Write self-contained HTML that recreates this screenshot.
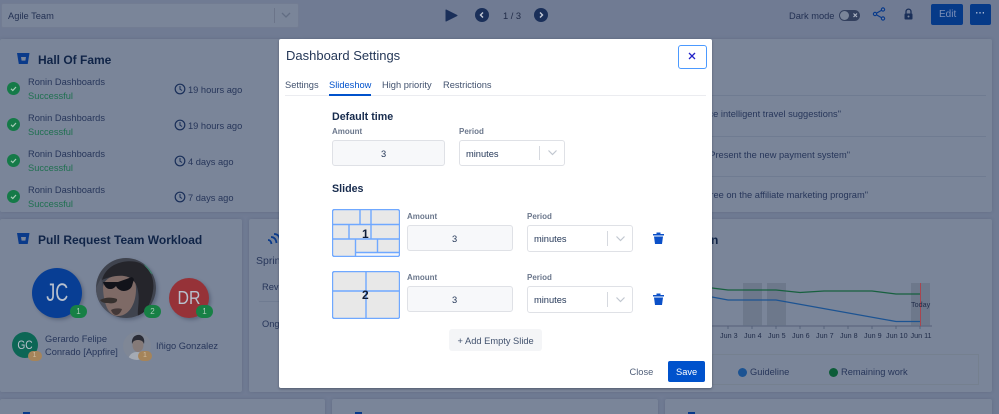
<!DOCTYPE html>
<html><head><meta charset="utf-8"><style>
html,body{margin:0;padding:0}
body{width:999px;height:414px;overflow:hidden;position:relative;background:#707b93;font-family:"Liberation Sans",sans-serif;color:#2e3b5c}
#w{position:absolute;left:0;top:0;width:999px;height:414px;overflow:hidden;filter:blur(.3px)}
.a{position:absolute;box-sizing:border-box}
.t{position:absolute;line-height:0;white-space:nowrap}
.card{position:absolute;background:#7a8599;border-radius:2px;box-shadow:0 0 3px rgba(60,70,95,.25)}
.n{font-size:9.3px;color:#27365a}
.s{font-size:9.3px;color:#1f7050}
.h{font-size:12px;font-weight:bold;color:#102447}
.c{border-radius:50%;position:absolute;text-align:center;color:#b8c0cd}
.c span{display:inline-block}
.b{position:absolute;border-radius:7px;text-align:center;color:#a9cbb8;font-size:8px;background:#178045}
.l{position:absolute;height:1px;background:#6f7b91}
.j{font-size:7.2px;color:#1f2b48;top:336px}
#m{position:absolute;left:279px;top:39px;width:433px;height:349px;background:#fff;border-radius:2px;box-shadow:0 1px 2px rgba(40,50,70,.5)}
.lb{font-size:8px;font-weight:bold;color:#6b778c}
.inp{position:absolute;box-sizing:border-box;background:#f7f8fa;border:1.5px solid #dfe1e6;border-radius:3px;width:106px;height:26px}
.sel{position:absolute;box-sizing:border-box;background:#fff;border:1.5px solid #dfe1e6;border-radius:3px;width:106px;height:27px}
.m9{font-size:9.3px;color:#253858}
</style></head><body><div id="w">

<!-- top bar -->
<div class="a" style="left:1px;top:3px;width:298px;height:25px;background:#7a8599;border:1px solid #727c92;border-radius:2px"></div>
<div class="a" style="left:274px;top:8px;width:1px;height:15px;background:#6b7489"></div>
<svg class="a" style="left:281px;top:12px" width="10" height="7"><path d="M1 1l4 4 4-4" fill="none" stroke="#626d83" stroke-width="1.300"/></svg>
<div class="t" style="left:8px;top:16px;font-size:9.3px;color:#233153">Agile Team</div>
<svg class="a" style="left:445px;top:9px" width="13" height="13"><path d="M1 1L12 6.500 1 12z" fill="#1a2f59" stroke="#1a2f59" stroke-linejoin="round"/></svg>
<div class="c" style="left:475px;top:8px;width:14px;height:14px;background:#1a2f59"></div>
<svg class="a" style="left:475px;top:8px" width="14" height="14"><path d="M8 4.500L5.500 7 8 9.500" fill="none" stroke="#c6ccd8" stroke-width="1.400"/></svg>
<div class="t" style="left:503px;top:16px;font-size:9.3px;color:#1f2a47">1 / 3</div>
<div class="c" style="left:534px;top:8px;width:14px;height:14px;background:#1a2f59"></div>
<svg class="a" style="left:534px;top:8px" width="14" height="14"><path d="M6 4.500L8.500 7 6 9.500" fill="none" stroke="#c6ccd8" stroke-width="1.400"/></svg>
<div class="t" style="left:789px;top:16px;font-size:9.3px;color:#233153">Dark mode</div>
<div class="a" style="left:839px;top:10px;width:21px;height:11px;border-radius:6px;background:#33405e"></div>
<div class="c" style="left:840px;top:11px;width:9px;height:9px;background:#7a8599"></div>
<svg class="a" style="left:852px;top:12px" width="7" height="7"><path d="M1.500 1.500l3.500 3.500M5 1.500L1.500 5" stroke="#aab2c2" stroke-width="1.200"/></svg>
<svg class="a" style="left:872px;top:7px" width="14" height="14"><path d="M11 2.500L3 7l8 4.500" fill="none" stroke="#0a3a8a" stroke-width="1.200"/><circle cx="11" cy="2.500" r="1.600" fill="#7a8599" stroke="#0a3a8a" stroke-width="1.200"/><circle cx="3" cy="7" r="1.600" fill="#7a8599" stroke="#0a3a8a" stroke-width="1.200"/><circle cx="11" cy="11.500" r="1.600" fill="#7a8599" stroke="#0a3a8a" stroke-width="1.200"/></svg>
<svg class="a" style="left:903px;top:8px" width="11" height="12"><path d="M3 5.500V3.600a2.500 2.500 0 015 0v1.900" fill="none" stroke="#1a2f59" stroke-width="1.300"/><rect x="1.500" y="5.500" width="8" height="6" rx="1" fill="#1a2f59"/><circle cx="5.500" cy="8.500" r="1" fill="#7a8599"/></svg>
<div class="a" style="left:931px;top:4px;width:32px;height:21px;background:#063a88;border-radius:2px"></div>
<div class="t" style="left:939px;top:14.500px;font-size:10px;color:#7e91b8">Edit</div>
<div class="a" style="left:970px;top:4px;width:21px;height:21px;background:#063a88;border-radius:2px"></div>
<div class="t" style="left:975.500px;top:13px;font-size:9px;font-weight:bold;color:#b9c4da;letter-spacing:.3px">···</div>

<!-- row 1 -->
<div class="card" style="left:0;top:39px;width:300px;height:173px"></div>
<div class="card" style="left:300px;top:39px;width:692px;height:173px"></div>
<svg class="a" style="left:17px;top:53px" width="13" height="12"><path d="M0 0h12.500l-1.800 11H1.800z" fill="#0a3a8a"/><path d="M4 4h5l-.6 3.600H4.600z" fill="#7a8599"/></svg>
<div class="t h" style="left:38px;top:60px">Hall Of Fame</div>

<svg class="a" style="left:7px;top:82px" width="13" height="13"><circle cx="6.500" cy="6.500" r="6.500" fill="#157a48"/><path d="M4 6.800l1.800 1.700L9 5" fill="none" stroke="#a9cdb8" stroke-width="1.200"/></svg>
<div class="t n" style="left:28px;top:82px">Ronin Dashboards</div>
<div class="t s" style="left:28px;top:96px">Successful</div>
<svg class="a" style="left:174px;top:83px" width="12" height="12"><circle cx="6" cy="6" r="4.800" fill="none" stroke="#1a2f59" stroke-width="1.200"/><path d="M6 3v3.200l2 1.300" fill="none" stroke="#1a2f59" stroke-width="1"/></svg>
<div class="t n" style="left:188px;top:89.500px">19 hours ago</div>

<svg class="a" style="left:7px;top:118px" width="13" height="13"><circle cx="6.500" cy="6.500" r="6.500" fill="#157a48"/><path d="M4 6.800l1.800 1.700L9 5" fill="none" stroke="#a9cdb8" stroke-width="1.200"/></svg>
<div class="t n" style="left:28px;top:118px">Ronin Dashboards</div>
<div class="t s" style="left:28px;top:132px">Successful</div>
<svg class="a" style="left:174px;top:119px" width="12" height="12"><circle cx="6" cy="6" r="4.800" fill="none" stroke="#1a2f59" stroke-width="1.200"/><path d="M6 3v3.200l2 1.300" fill="none" stroke="#1a2f59" stroke-width="1"/></svg>
<div class="t n" style="left:188px;top:125.500px">19 hours ago</div>

<svg class="a" style="left:7px;top:154px" width="13" height="13"><circle cx="6.500" cy="6.500" r="6.500" fill="#157a48"/><path d="M4 6.800l1.800 1.700L9 5" fill="none" stroke="#a9cdb8" stroke-width="1.200"/></svg>
<div class="t n" style="left:28px;top:154px">Ronin Dashboards</div>
<div class="t s" style="left:28px;top:168px">Successful</div>
<svg class="a" style="left:174px;top:155px" width="12" height="12"><circle cx="6" cy="6" r="4.800" fill="none" stroke="#1a2f59" stroke-width="1.200"/><path d="M6 3v3.200l2 1.300" fill="none" stroke="#1a2f59" stroke-width="1"/></svg>
<div class="t n" style="left:188px;top:161.500px">4 days ago</div>

<svg class="a" style="left:7px;top:190px" width="13" height="13"><circle cx="6.500" cy="6.500" r="6.500" fill="#157a48"/><path d="M4 6.800l1.800 1.700L9 5" fill="none" stroke="#a9cdb8" stroke-width="1.200"/></svg>
<div class="t n" style="left:28px;top:190px">Ronin Dashboards</div>
<div class="t s" style="left:28px;top:204px">Successful</div>
<svg class="a" style="left:174px;top:191px" width="12" height="12"><circle cx="6" cy="6" r="4.800" fill="none" stroke="#1a2f59" stroke-width="1.200"/><path d="M6 3v3.200l2 1.300" fill="none" stroke="#1a2f59" stroke-width="1"/></svg>
<div class="t n" style="left:188px;top:197.500px">7 days ago</div>

<div class="l" style="left:712px;top:95px;width:274px"></div>
<div class="l" style="left:712px;top:136px;width:274px"></div>
<div class="l" style="left:712px;top:176px;width:274px"></div>
<div class="t n" style="right:158px;top:114px">Introduce intelligent travel suggestions"</div>
<div class="t n" style="right:149px;top:154.500px">"Present the new payment system"</div>
<div class="t n" style="right:131px;top:195px">Agree on the affiliate marketing program"</div>

<!-- row 2 -->
<div class="card" style="left:0;top:219px;width:242px;height:173px"></div>
<div class="card" style="left:249px;top:219px;width:743px;height:173px"></div>
<svg class="a" style="left:17px;top:233px" width="13" height="12"><path d="M0 0h12.500l-1.800 11H1.800z" fill="#0a3a8a"/><path d="M4 4h5l-.6 3.600H4.600z" fill="#7a8599"/></svg>
<div class="t h" style="left:38px;top:240px">Pull Request Team Workload</div>

<div class="c" style="left:32px;top:268px;width:50px;height:50px;background:#083e94;font-size:25px;line-height:50px;box-shadow:2px 2px 3px rgba(50,60,85,.4)"><span style="transform:scaleX(.72)">JC</span></div>
<svg class="a" style="left:96px;top:258px;border-radius:50%;box-shadow:2px 2px 3px rgba(50,60,85,.4)" width="60" height="60" viewBox="0 0 60 60">
<rect width="60" height="60" fill="#3f434e"/>
<path d="M45 0h15v18l-8-4z" fill="#3d7d6a"/>
<path d="M0 30l5-10 6 26 10 14H0z" fill="#4c505c"/>
<path d="M7 30c0-8 8-14 24-13 6 1 9 6 9 14 0 16-8 27-18 27-8 0-14-8-15-28z" fill="#7e6a66"/>
<path d="M6 22C10 6 30 0 44 5c10 5 15 16 13 28-2 12-6 20-15 26-1-8 2-16 0-26-1-8-6-14-14-15-8-1-18 2-22 4z" fill="#25252b"/>
<path d="M7 24l15 0 14-5 2 2-2 7c-2 5-9 6-12 4-2-1-3-2-4-4-2 2-3 3-6 3-4 0-6-4-7-7z" fill="#12131a"/>
<path d="M4 42c5-3 12-3 17-1 1 4-5 5-9 4-3 0-6 0-8-3z" fill="#36302e"/>
<path d="M15 52c3-2 8-2 11-1-1 3-3 6-6 6-2 0-4-2-5-5z" fill="#433838"/>
</svg>
<div class="c" style="left:169px;top:278px;width:40px;height:40px;background:#963238;font-size:18px;line-height:40px;box-shadow:2px 2px 3px rgba(50,60,85,.4)"><span style="transform:scaleX(.88)">DR</span></div>
<div class="b" style="left:70px;top:305px;width:17px;height:13px;line-height:13px">1</div>
<div class="b" style="left:144px;top:305px;width:17px;height:13px;line-height:13px">2</div>
<div class="b" style="left:196px;top:305px;width:17px;height:13px;line-height:13px">1</div>

<div class="c" style="left:12px;top:332px;width:26px;height:26px;background:#0c6655;font-size:12px;line-height:26px"><span style="transform:scaleX(.85)">GC</span></div>
<svg class="a" style="left:123px;top:332px;border-radius:50%" width="28" height="28" viewBox="0 0 28 28"><rect width="28" height="28" fill="#7f8796"/><path d="M5 28c1-6 5-8 9-8s8 2 9 8z" fill="#a4aab4"/><ellipse cx="15" cy="13" rx="5.500" ry="7" fill="#857a78"/><path d="M9 12c-1-7 4-10 8-9 3 1 5 4 4 9-1-3-3-4-6-4-3 0-5 1-6 4z" fill="#2a2c36"/></svg>
<div class="b" style="left:27.500px;top:351px;width:14px;height:10px;line-height:10px;font-size:7px;background:#a5845a;color:#d0bea0">1</div>
<div class="b" style="left:138px;top:351px;width:14px;height:10px;line-height:10px;font-size:7px;background:#a5845a;color:#d0bea0">1</div>
<div class="t n" style="left:45px;top:339px">Gerardo Felipe</div>
<div class="t n" style="left:45px;top:352px">Conrado [Appfire]</div>
<div class="t n" style="left:156px;top:345.500px">Iñigo Gonzalez</div>

<svg class="a" style="left:267px;top:232px" width="14" height="14"><path d="M1 8c2 0 3 1 3.500 4M4 5c3 0 5 2 5.500 6M7 2c4 0 6 3 6 8" fill="none" stroke="#0a3a8a" stroke-width="1.800"/></svg>
<div class="t" style="left:256px;top:260.500px;font-size:10.500px;color:#27365a">Sprint</div>
<div class="t n" style="left:262px;top:286.500px">Review</div>
<div class="l" style="left:259px;top:301px;width:60px"></div>
<div class="t n" style="left:262px;top:323.500px">Ongoing</div>

<div class="t h" style="left:711px;top:240px">n</div>
<!-- chart -->
<svg class="a" style="left:700px;top:275px" width="240" height="70">
<rect x="43" y="8" width="19" height="43" fill="#6d788b"/><rect x="67" y="8" width="19" height="43" fill="#6d788b"/><rect x="211" y="8" width="19" height="43" fill="#6d788b"/>
<path d="M12 51H232" stroke="#626d84" stroke-width="1.500"/>
<path d="M28 51v3M52 51v3M76 51v3M100 51v3M124 51v3M148 51v3M172 51v3M196 51v3M220 51v3" stroke="#4f5a73" stroke-width=".8"/>
<path d="M12 13l16 2h48l24 2.500 24-1.500h48l24 3h24" fill="none" stroke="#17603f" stroke-width="1.300"/>
<path d="M12 22l16 3h48l120 21.500h24" fill="none" stroke="#1c5392" stroke-width="1.300"/>
<path d="M220.500 8v43" stroke="#a8454f" stroke-width="1"/>
</svg>
<div class="t" style="left:911px;top:305px;font-size:7.200px;color:#1f2b48">Today</div>
<div class="t j" style="left:720px">Jun 3</div>
<div class="t j" style="left:744px">Jun 4</div>
<div class="t j" style="left:768px">Jun 5</div>
<div class="t j" style="left:792px">Jun 6</div>
<div class="t j" style="left:816px">Jun 7</div>
<div class="t j" style="left:840px">Jun 8</div>
<div class="t j" style="left:864px">Jun 9</div>
<div class="t j" style="left:886px">Jun 10</div>
<div class="t j" style="left:910.500px">Jun 11</div>
<div class="a" style="left:712px;top:354px;width:267px;height:31px;border:1px solid #75808f"></div>
<div class="c" style="left:737.500px;top:367.500px;width:9px;height:9px;background:#1c5392"></div>
<div class="t n" style="left:750px;top:371.500px">Guideline</div>
<div class="c" style="left:829px;top:367.500px;width:9px;height:9px;background:#0c5c38"></div>
<div class="t n" style="left:841px;top:371.500px">Remaining work</div>

<!-- row 3 -->
<div class="card" style="left:0;top:399px;width:325px;height:20px"></div>
<div class="card" style="left:332px;top:399px;width:326px;height:20px"></div>
<div class="card" style="left:665px;top:399px;width:327px;height:20px"></div>
<div class="a" style="left:23px;top:412px;width:7px;height:2px;background:#0a3a8a"></div>
<div class="a" style="left:355px;top:412px;width:7px;height:2px;background:#0a3a8a"></div>
<div class="a" style="left:688px;top:412px;width:7px;height:2px;background:#0a3a8a"></div>

<!-- modal -->
<div id="m"></div>
<div class="t" style="left:286px;top:56px;font-size:13px;color:#253858">Dashboard Settings</div>
<div class="t m9" style="left:285px;top:85px;color:#42526e">Settings</div>
<div class="t m9" style="left:329px;top:85px;color:#0052cc">Slideshow</div>
<div class="t m9" style="left:382px;top:85px;color:#42526e">High priority</div>
<div class="t m9" style="left:443px;top:85px;color:#42526e">Restrictions</div>
<div class="a" style="left:285px;top:94.500px;width:421px;height:1.500px;background:#ebecf0"></div>
<div class="a" style="left:329px;top:94px;width:42px;height:2px;background:#0052cc"></div>
<div class="a" style="left:678px;top:45px;width:29px;height:23.500px;border:1.500px solid #4c9aff;border-radius:3px"></div>
<svg class="a" style="left:688px;top:52px" width="8" height="8"><path d="M1 1l6 6M7 1L1 7" stroke="#2424c8" stroke-width="1.300"/></svg>

<div class="t" style="left:332px;top:116.500px;font-size:10.700px;font-weight:bold;color:#172b4d">Default time</div>
<div class="t lb" style="left:332px;top:131.500px">Amount</div>
<div class="inp" style="left:332px;top:140px;width:113px"></div>
<div class="t m9" style="left:381px;top:153.500px">3</div>
<div class="t lb" style="left:459px;top:131.500px">Period</div>
<div class="sel" style="left:459px;top:140px;height:26px"></div>
<div class="t m9" style="left:466px;top:153.500px">minutes</div>
<div class="a" style="left:539px;top:146px;width:1px;height:14px;background:#d6d9df"></div>
<svg class="a" style="left:548px;top:150px" width="9" height="6"><path d="M.5 .5l4 4 4-4" fill="none" stroke="#c1c7d0" stroke-width="1.200"/></svg>

<div class="t" style="left:332px;top:188.500px;font-size:10.700px;font-weight:bold;color:#172b4d">Slides</div>

<svg class="a" style="left:332px;top:209px" width="68" height="48" fill="none"><rect x=".5" y=".5" width="67" height="47" rx="2" fill="#e8e8e8"/><rect x="23" y="44" width="44.500" height="3.500" fill="#f6f7fa"/><g stroke="#6fa8ff" stroke-width="1.400"><path d="M.5 15.500h67M.5 30h67M28 .5v15M39 .5v15M17 15.500V30M39 15.500V30M23.500 30v17.500M45.500 30v13M23.500 43.500h44"/><rect x=".5" y=".5" width="67" height="47" rx="2"/></g></svg>
<div class="t" style="left:362px;top:233.500px;font-size:12px;font-weight:bold;color:#0e1c38">1</div>
<div class="t lb" style="left:407px;top:216.500px">Amount</div>
<div class="inp" style="left:407px;top:225px"></div>
<div class="t m9" style="left:452px;top:238.500px">3</div>
<div class="t lb" style="left:527px;top:216.500px">Period</div>
<div class="sel" style="left:527px;top:225px"></div>
<div class="t m9" style="left:534px;top:239px">minutes</div>
<div class="a" style="left:607px;top:231px;width:1px;height:15px;background:#d6d9df"></div>
<svg class="a" style="left:616px;top:236px" width="9" height="6"><path d="M.5 .5l4 4 4-4" fill="none" stroke="#c1c7d0" stroke-width="1.200"/></svg>
<svg class="a" style="left:653px;top:232px" width="11" height="12"><path d="M0 2h11v1.500H0zM3.500 .5h4V2h-4z" fill="#0b50c8"/><path d="M1 4.500h9l-1 7.500H2z" fill="#0b50c8"/></svg>

<svg class="a" style="left:332px;top:271px" width="68" height="48" fill="none"><rect x=".5" y=".5" width="67" height="47" rx="2" fill="#e8e8e8"/><g stroke="#6fa8ff" stroke-width="1.400"><path d="M.5 20h67M34 .5v47"/><rect x=".5" y=".5" width="67" height="47" rx="2"/></g></svg>
<div class="t" style="left:362px;top:295px;font-size:12px;font-weight:bold;color:#0e1c38">2</div>
<div class="t lb" style="left:407px;top:277.500px">Amount</div>
<div class="inp" style="left:407px;top:286px"></div>
<div class="t m9" style="left:452px;top:299.500px">3</div>
<div class="t lb" style="left:527px;top:277.500px">Period</div>
<div class="sel" style="left:527px;top:286px"></div>
<div class="t m9" style="left:534px;top:300px">minutes</div>
<div class="a" style="left:607px;top:292px;width:1px;height:15px;background:#d6d9df"></div>
<svg class="a" style="left:616px;top:297px" width="9" height="6"><path d="M.5 .5l4 4 4-4" fill="none" stroke="#c1c7d0" stroke-width="1.200"/></svg>
<svg class="a" style="left:653px;top:293px" width="11" height="12"><path d="M0 2h11v1.500H0zM3.500 .5h4V2h-4z" fill="#0b50c8"/><path d="M1 4.500h9l-1 7.500H2z" fill="#0b50c8"/></svg>

<div class="a" style="left:449px;top:329px;width:93px;height:22px;background:#f4f5f7;border-radius:3px"></div>
<div class="t m9" style="left:457.500px;top:340.500px;color:#42526e">+ Add Empty Slide</div>
<div class="t m9" style="left:629.500px;top:371.500px;color:#505f79">Close</div>
<div class="a" style="left:668px;top:361px;width:37px;height:21px;background:#0052cc;border-radius:2px"></div>
<div class="t m9" style="left:676px;top:371.500px;color:#fff">Save</div>
</div></body></html>
